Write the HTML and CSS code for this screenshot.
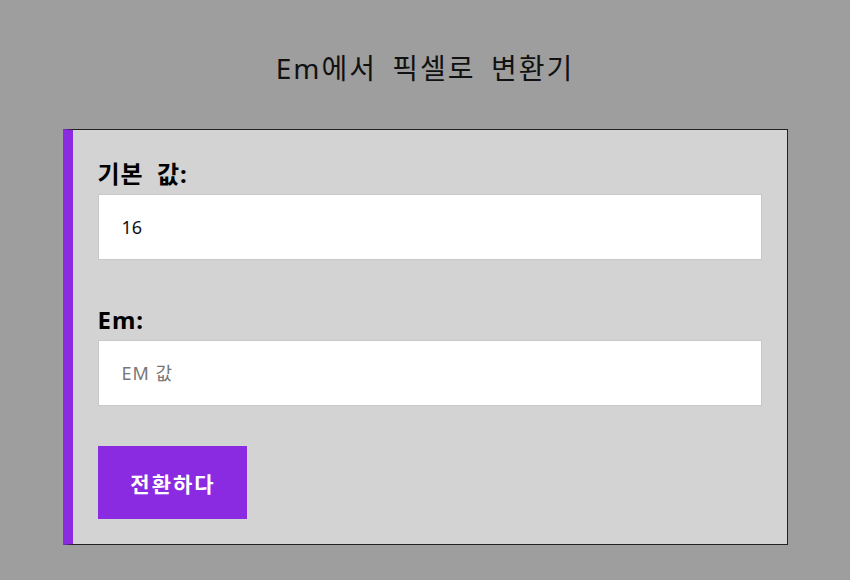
FILE: index.html
```html
<!DOCTYPE html>
<html lang="ko">
<head>
<meta charset="utf-8">
<title>Em에서 픽셀로 변환기</title>
<link rel="stylesheet" href="styles.css">
</head>
<body>
<h1 class="title">Em에서 픽셀로 변환기</h1>
<div class="card">
  <div class="field">
    <label class="label" for="base">기본 값:</label>
    <input class="input" id="base" type="text" value="16">
  </div>
  <div class="field field-em">
    <label class="label" for="em">Em:</label>
    <input class="input" id="em" type="text" placeholder="EM 값">
  </div>
  <button class="btn" type="button">전환하다</button>
</div>
</body>
</html>
```

FILE: styles.css
```css
html, body {
  margin: 0;
  padding: 0;
}
body {
  background: #9e9e9e;
  font-family: "Noto Sans", "Noto Sans CJK KR", sans-serif;
  color: #111;
}
.title {
  margin: 0;
  padding-top: 48px;
  height: 81px;
  box-sizing: border-box;
  text-align: center;
  font-weight: 400;
  font-size: 28px;
  letter-spacing: 2px;
  word-spacing: 6px;
  line-height: 40px;
  color: #111;
}
.card {
  width: 725px;
  box-sizing: border-box;
  margin: 48px auto 0;
  background: #d3d3d3;
  border: 1px solid #222;
  border-left: 10px solid #8a2be2;
  padding: 27px 25px 25px 25px;
  display: flex;
  flex-direction: column;
  align-items: flex-start;
}
.field {
  display: flex;
  flex-direction: column;
  align-self: stretch;
}
.field-em {
  margin-top: 43px;
}
.label {
  font-weight: 700;
  font-size: 24px;
  letter-spacing: 1px;
  word-spacing: 6px;
  line-height: 34px;
  margin-bottom: 3px;
  color: #000;
}
.input {
  height: 66px;
  box-sizing: border-box;
  border: 1px solid #c8c8c8;
  background: #fff;
  padding: 0 23px;
  font-family: "Noto Sans", "Noto Sans CJK KR", sans-serif;
  font-size: 18px;
  color: #111;
  outline: none;
}
.input::placeholder {
  color: #777;
  letter-spacing: 1px;
}
.btn {
  margin-top: 40px;
  width: 149px;
  height: 73px;
  border: none;
  background: #8a2be2;
  color: #fff;
  font-family: "Noto Sans", "Noto Sans CJK KR", sans-serif;
  font-weight: 700;
  font-size: 21px;
  letter-spacing: 2px;
  text-indent: 2px;
}
```
